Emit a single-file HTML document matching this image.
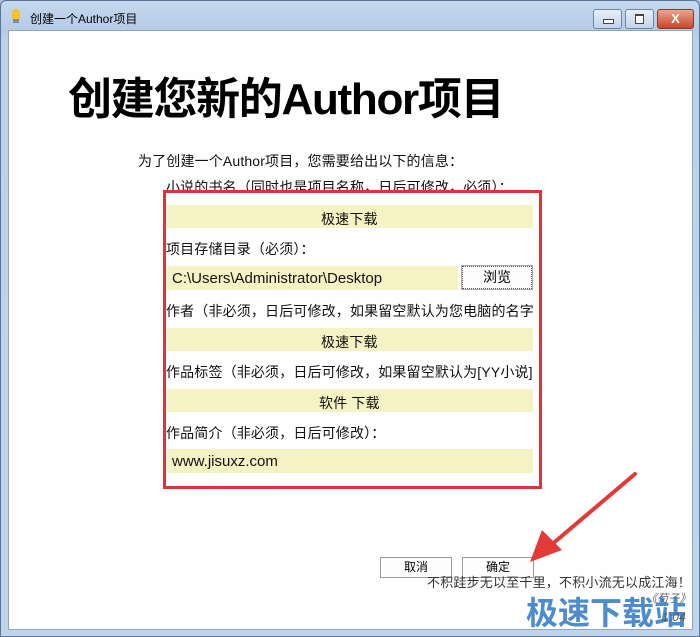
<!DOCTYPE html>
<html><head><meta charset="utf-8"><style>
body{margin:0;width:700px;height:637px;overflow:hidden;background:#a9c4e2;font-family:"Liberation Sans","Microsoft YaHei","Noto Sans CJK SC",sans-serif;position:relative}
.a{position:absolute}
.frame{left:0;top:0;width:698px;height:635px;border:1px solid #5a7598;border-radius:6px 6px 0 0;background:linear-gradient(#c5d8ee,#b4cbe6 30px,#bcd2ea 40px,#c0d5ec);}
.client{left:8px;top:30px;width:683px;height:598px;background:#fefefe;border:1px solid #8ea6c4}
.t{font-size:14px;letter-spacing:0.15px;color:#111;white-space:nowrap;font-family:"Liberation Sans","Noto Sans CJK SC",sans-serif}
.bar{background:#f5f2c4;height:23px}
.btn{border:1px solid #9a9a9a;background:#fdfdfd;font-size:12px;text-align:center;line-height:19px;font-family:"Liberation Sans","Noto Sans CJK SC",sans-serif}
.wb{top:9px;height:18px;border:1px solid #6c84a6;border-radius:3px;background:linear-gradient(#e8f0fa,#c2d3e8)}
</style></head><body>
<div class="a frame"></div>
<div class="a" style="left:12px;top:9px;width:8px;height:11px;border-radius:4px 4px 2px 2px;background:#f3c22c"></div>
<div class="a" style="left:13px;top:19px;width:6px;height:4px;background:#8a8a8a"></div>
<div class="a" style="left:30px;top:10px;font-size:12px;white-space:nowrap;font-family:'Liberation Sans','Noto Sans CJK SC',sans-serif">创建一个Author项目</div>
<div class="a wb" style="left:593px;width:27px"><div class="a" style="left:9px;top:9px;width:9px;height:3px;border:1px solid #444;background:#fff"></div></div>
<div class="a wb" style="left:625px;width:27px"><div class="a" style="left:9px;top:4px;width:7px;height:7px;border:1px solid #444;border-top-width:2px;background:#fff"></div></div>
<div class="a wb" style="left:657px;width:35px;border-color:#8a3a2a;background:linear-gradient(#e9a590,#c8462c);color:#fff;font-weight:bold;font-size:13px;text-align:center;line-height:17px">X</div>
<div class="a client"></div>
<div class="a" style="left:68px;top:63px;font-size:44px;font-weight:bold;color:#000;white-space:nowrap;font-family:'Liberation Sans','Noto Sans CJK SC',sans-serif;letter-spacing:-1.3px">创建您新的Author项目</div>
<div class="a t" style="left:138px;top:151px">为了创建一个Author项目，您需要给出以下的信息：</div>
<div class="a t" style="left:166px;top:177px">小说的书名（同时也是项目名称，日后可修改，必须）：</div>
<div class="a" style="left:163px;top:190px;width:373px;height:293px;border:3px solid #d6373b;background:#fefefe"></div>
<div class="a bar" style="left:167px;top:205px;width:366px"></div>
<div class="a t" style="left:321px;top:209px">极速下载</div>
<div class="a t" style="left:166px;top:239px">项目存储目录（必须）：</div>
<div class="a bar" style="left:167px;top:266px;width:291px;height:24px"></div>
<div class="a t" style="left:172px;top:270px;font-size:15px;letter-spacing:0">C:\Users\Administrator\Desktop</div>
<div class="a btn" style="left:462px;top:266px;width:68px;height:21px;border:1px dotted #555;outline:1px solid #aaa;font-size:14px;line-height:21px">浏览</div>
<div class="a t" style="left:166px;top:301px">作者（非必须，日后可修改，如果留空默认为您电脑的名字</div>
<div class="a bar" style="left:167px;top:328px;width:366px"></div>
<div class="a t" style="left:321px;top:332px">极速下载</div>
<div class="a t" style="left:166px;top:362px">作品标签（非必须，日后可修改，如果留空默认为[YY小说]</div>
<div class="a bar" style="left:167px;top:389px;width:366px"></div>
<div class="a t" style="left:319px;top:393px">软件 下载</div>
<div class="a t" style="left:166px;top:423px">作品简介（非必须，日后可修改）：</div>
<div class="a bar" style="left:167px;top:449px;width:366px;height:24px"></div>
<div class="a t" style="left:172px;top:453px;font-size:15px;letter-spacing:0">www.jisuxz.com</div>
<div class="a btn" style="left:380px;top:557px;width:70px;height:19px">取消</div>
<div class="a btn" style="left:462px;top:557px;width:70px;height:19px">确定</div>
<svg class="a" style="left:520px;top:470px" width="120" height="100"><path d="M115 4 L30 76" stroke="#e23a36" stroke-width="4" stroke-linecap="round"/><path d="M10 92 L22 60 L42 80 Z" fill="#e23a36"/></svg>
<div class="a t" style="left:427px;top:572px;color:#333;font-size:13px;letter-spacing:0.2px">不积跬步无以至千里，不积小流无以成江海！</div>
<div class="a t" style="left:646px;top:590px;font-size:11px;color:#666;font-style:italic">《荀子》</div>
<div class="a" style="left:526px;top:588px;font-size:32px;font-weight:bold;color:#3a7fc8;white-space:nowrap;font-family:'Liberation Sans','Noto Sans CJK SC',sans-serif;opacity:.9">极速下载站</div>
<div class="a t" style="left:662px;top:610px;font-size:12px;color:#555;font-style:italic">1:04</div>
</body></html>
